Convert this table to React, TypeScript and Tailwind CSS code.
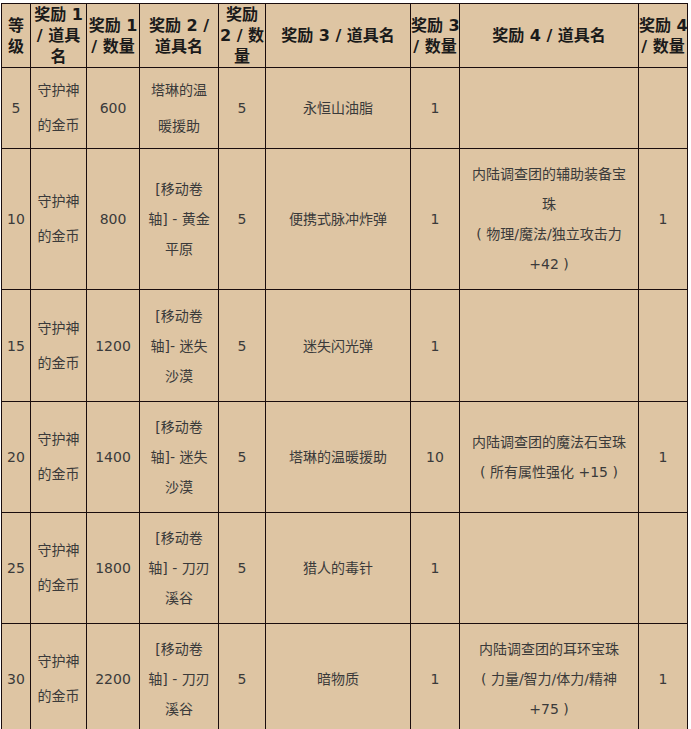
import React from "react";

type Cell = { lines: string[]; lh?: string };

const headers: { w: string; lines: string[] }[] = [
  { w: "w-[29px]", lines: ["等", "级"] },
  { w: "w-[56px]", lines: ["奖励 1", "/ 道具", "名"] },
  { w: "w-[53px]", lines: ["奖励 1", "/ 数量"] },
  { w: "w-[79px]", lines: ["奖励 2 /", "道具名"] },
  { w: "w-[47px]", lines: ["奖励", "2 / 数", "量"] },
  { w: "w-[145px]", lines: ["奖励 3 / 道具名"] },
  { w: "w-[49px]", lines: ["奖励 3", "/ 数量"] },
  { w: "w-[179px]", lines: ["奖励 4 / 道具名"] },
  { w: "w-[49px]", lines: ["奖励 4", "/ 数量"] },
];

const rows: { h: string; cells: Cell[] }[] = [
  {
    h: "h-[81px]",
    cells: [
      { lines: ["5"] },
      { lines: ["守护神", "的金币"], lh: "leading-[35px]" },
      { lines: ["600"] },
      { lines: ["塔琳的温", "暖援助"], lh: "leading-[36px]" },
      { lines: ["5"] },
      { lines: ["永恒山油脂"] },
      { lines: ["1"] },
      { lines: [] },
      { lines: [] },
    ],
  },
  {
    h: "h-[141px]",
    cells: [
      { lines: ["10"] },
      { lines: ["守护神", "的金币"], lh: "leading-[35px]" },
      { lines: ["800"] },
      { lines: ["[移动卷", "轴] - 黄金", "平原"] },
      { lines: ["5"] },
      { lines: ["便携式脉冲炸弹"] },
      { lines: ["1"] },
      { lines: ["内陆调查团的辅助装备宝", "珠", "( 物理/魔法/独立攻击力", "+42 )"] },
      { lines: ["1"] },
    ],
  },
  {
    h: "h-[112px]",
    cells: [
      { lines: ["15"] },
      { lines: ["守护神", "的金币"], lh: "leading-[35px]" },
      { lines: ["1200"] },
      { lines: ["[移动卷", "轴]- 迷失", "沙漠"] },
      { lines: ["5"] },
      { lines: ["迷失闪光弹"] },
      { lines: ["1"] },
      { lines: [] },
      { lines: [] },
    ],
  },
  {
    h: "h-[111px]",
    cells: [
      { lines: ["20"] },
      { lines: ["守护神", "的金币"], lh: "leading-[35px]" },
      { lines: ["1400"] },
      { lines: ["[移动卷", "轴]- 迷失", "沙漠"] },
      { lines: ["5"] },
      { lines: ["塔琳的温暖援助"] },
      { lines: ["10"] },
      { lines: ["内陆调查团的魔法石宝珠", "( 所有属性强化 +15 )"] },
      { lines: ["1"] },
    ],
  },
  {
    h: "h-[111px]",
    cells: [
      { lines: ["25"] },
      { lines: ["守护神", "的金币"], lh: "leading-[35px]" },
      { lines: ["1800"] },
      { lines: ["[移动卷", "轴] - 刀刃", "溪谷"] },
      { lines: ["5"] },
      { lines: ["猎人的毒针"] },
      { lines: ["1"] },
      { lines: [] },
      { lines: [] },
    ],
  },
  {
    h: "h-[111px]",
    cells: [
      { lines: ["30"] },
      { lines: ["守护神", "的金币"], lh: "leading-[35px]" },
      { lines: ["2200"] },
      { lines: ["[移动卷", "轴] - 刀刃", "溪谷"] },
      { lines: ["5"] },
      { lines: ["暗物质"] },
      { lines: ["1"] },
      { lines: ["内陆调查团的耳环宝珠", "( 力量/智力/体力/精神", "+75 )"] },
      { lines: ["1"] },
    ],
  },
];

export default function App() {
  return (
    <div className="bg-white w-[691px] h-[729px] overflow-hidden pt-[3px] pl-px font-['DejaVu_Sans','Noto_Sans_CJK_SC',sans-serif]">
      <table className="table-fixed border-collapse w-[687px] bg-[#dec5a3]">
        <thead>
          <tr>
            {headers.map((h, i) => (
              <th
                key={i}
                className={`${h.w} border border-[#1a0d0d] h-[64px] p-0 text-center align-middle font-bold text-[16px] leading-[21px] text-[#1a1a1a] whitespace-nowrap`}
              >
                {h.lines.map((l, j) => (
                  <div key={j}>{l}</div>
                ))}
              </th>
            ))}
          </tr>
        </thead>
        <tbody>
          {rows.map((r, ri) => (
            <tr key={ri}>
              {r.cells.map((c, ci) => (
                <td
                  key={ci}
                  className={`${r.h} border border-[#1a0d0d] p-0 text-center align-middle text-[14px] text-[#3a3a3a] whitespace-nowrap ${c.lh ?? "leading-[30px]"}`}
                >
                  {c.lines.map((l, j) => (
                    <div key={j}>{l}</div>
                  ))}
                </td>
              ))}
            </tr>
          ))}
        </tbody>
      </table>
    </div>
  );
}
